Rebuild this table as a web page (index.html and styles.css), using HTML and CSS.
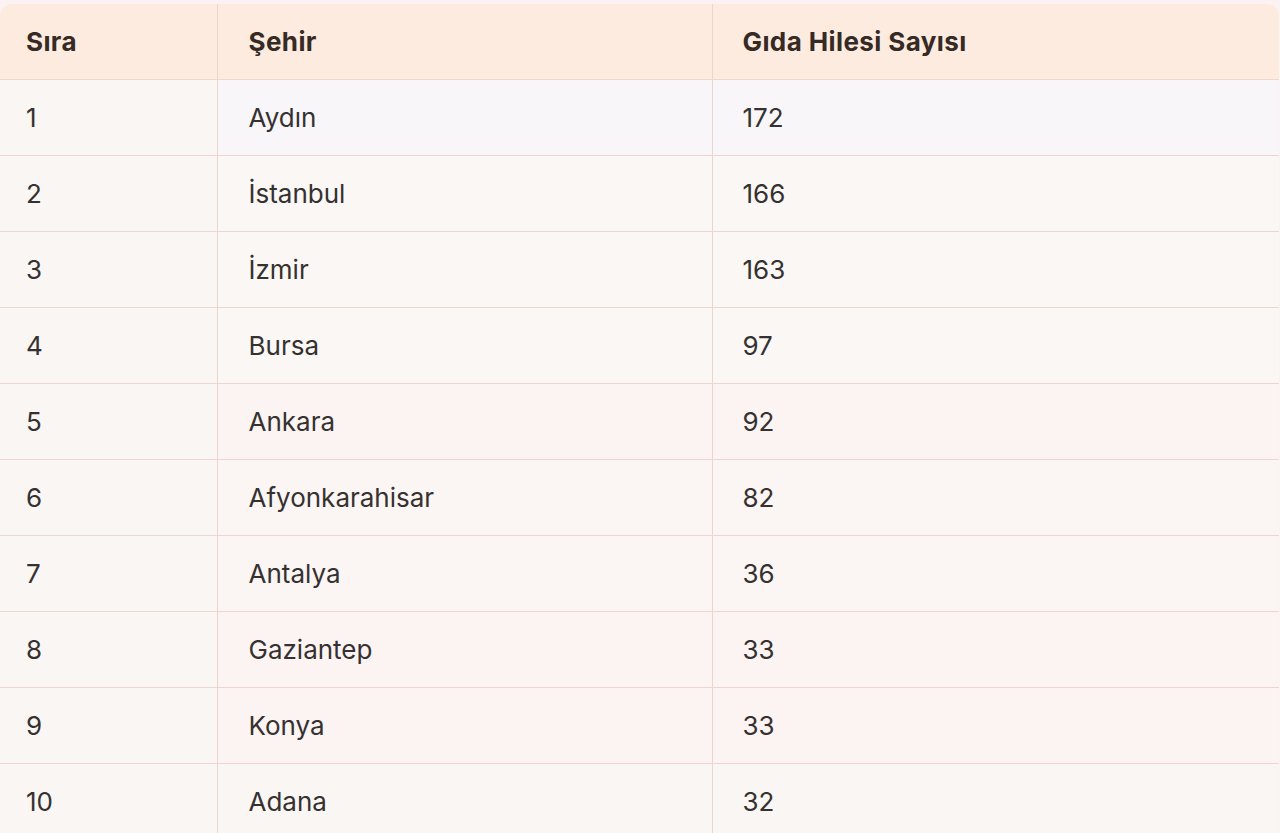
FILE: index.html
```html
<!DOCTYPE html>
<html lang="tr">
<head>
<meta charset="utf-8">
<link rel="stylesheet" href="styles.css">
</head>
<body>
<div class="wrap">
<table class="tbl">
<thead>
<tr><th class="c1">Sıra</th><th class="c2">Şehir</th><th class="c3">Gıda Hilesi Sayısı</th></tr>
</thead>
<tbody>
<tr class="r1"><td class="c1">1</td><td class="c2">Aydın</td><td class="c3">172</td></tr>
<tr class="r2"><td class="c1">2</td><td class="c2">İstanbul</td><td class="c3">166</td></tr>
<tr class="r3"><td class="c1">3</td><td class="c2">İzmir</td><td class="c3">163</td></tr>
<tr class="r4"><td class="c1">4</td><td class="c2">Bursa</td><td class="c3">97</td></tr>
<tr class="r5"><td class="c1">5</td><td class="c2">Ankara</td><td class="c3">92</td></tr>
<tr class="r6"><td class="c1">6</td><td class="c2">Afyonkarahisar</td><td class="c3">82</td></tr>
<tr class="r7"><td class="c1">7</td><td class="c2">Antalya</td><td class="c3">36</td></tr>
<tr class="r8"><td class="c1">8</td><td class="c2">Gaziantep</td><td class="c3">33</td></tr>
<tr class="r9"><td class="c1">9</td><td class="c2">Konya</td><td class="c3">33</td></tr>
<tr class="r10"><td class="c1">10</td><td class="c2">Adana</td><td class="c3">32</td></tr>
</tbody>
</table>
</div>
</body>
</html>
```
FILE: styles.css
```css
html, body {
  margin: 0;
  padding: 0;
  background: #fbf3f3;
  height: 833px;
  overflow: hidden;
}
.wrap {
  margin: 4px 1px 0 0;
  border-radius: 12px 12px 0 0;
  overflow: hidden;
  background: #faf6f3;
}
.tbl {
  width: 100%;
  border-collapse: collapse;
  table-layout: fixed;
  font-family: Inter, "Noto Sans", sans-serif;
  font-size: 26px;
  color: #353131;
}
.tbl th, .tbl td {
  box-sizing: border-box;
  text-align: left;
  vertical-align: middle;
  height: 76px;
  padding: 0;
  border-bottom: 1px solid #efd5d0;
}
.tbl th {
  height: 75px;
  background: #fdebdf;
  font-weight: 700;
  letter-spacing: 0.4px;
  color: #362a25;
  border-bottom: 1px solid #eed8cc;
}
.tbl .c1 { width: 217px; padding-left: 26px; }
.tbl .c2 { width: 495px; padding-left: 31px; border-left: 1px solid #ecd6cc; }
.tbl .c3 { padding-left: 30px; border-left: 1px solid #ecd6cc; }
td.c1 { background: #f9f6f3; }
.r1 td.c2, .r1 td.c3 { background: #f8f6f9; }
.r2 td.c2, .r2 td.c3 { background: #faf7f5; }
.r3 td.c2, .r3 td.c3 { background: #faf7f5; }
.r4 td.c2, .r4 td.c3 { background: #faf7f5; }
.r5 td.c2, .r5 td.c3 { background: #fcf4f3; }
.r6 td.c2, .r6 td.c3 { background: #fbf5f3; }
.r7 td.c2, .r7 td.c3 { background: #fbf5f3; }
.r8 td.c2, .r8 td.c3 { background: #fcf4f3; }
.r9 td.c2, .r9 td.c3 { background: #fcf4f3; }
.r10 td.c2, .r10 td.c3 { background: #faf6f3; }
```
